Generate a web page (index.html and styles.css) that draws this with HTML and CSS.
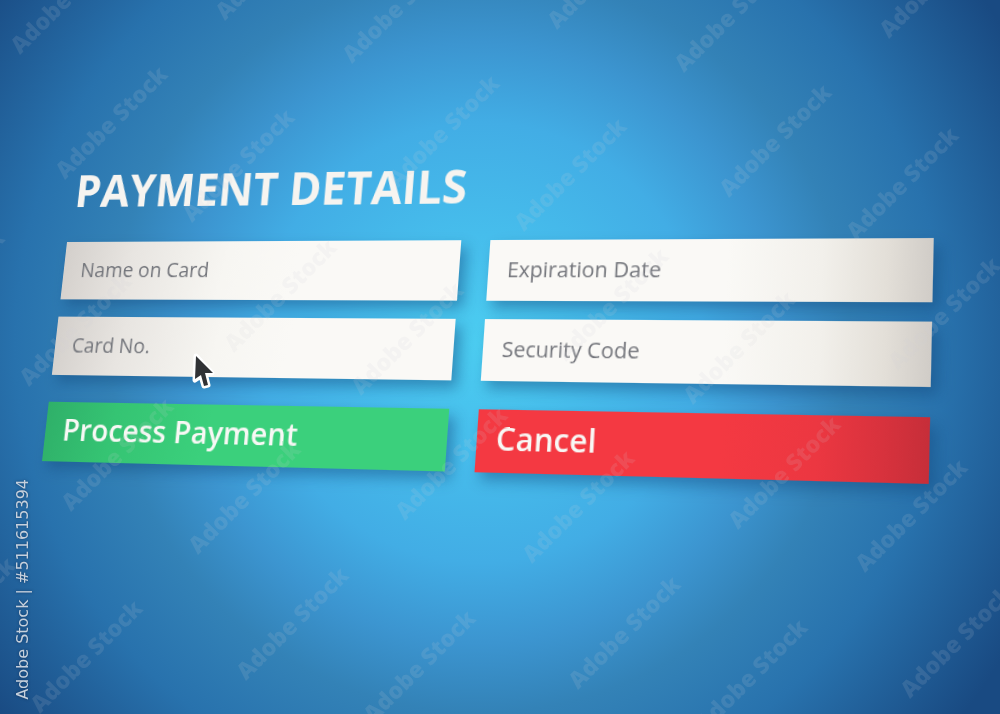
FILE: index.html
```html
<!DOCTYPE html>
<html lang="en">
<head>
  <meta charset="utf-8">
  <title>Payment Details</title>
  <link rel="stylesheet" href="styles.css">
</head>
<body>
  <main class="stage">
    <form class="payment">
      <h1 class="payment-title">PAYMENT DETAILS</h1>
      <div class="fields">
        <input class="field field-left" type="text" placeholder="Name on Card" aria-label="Name on Card">
        <input class="field field-right" type="text" placeholder="Expiration Date" aria-label="Expiration Date">
        <input class="field field-left" type="text" placeholder="Card No." aria-label="Card No.">
        <input class="field field-right" type="text" placeholder="Security Code" aria-label="Security Code">
      </div>
      <div class="actions">
        <button class="btn btn-pay" type="submit">Process Payment</button>
        <button class="btn btn-cancel" type="button">Cancel</button>
      </div>
    </form>
  </main>

  <svg class="cursor" width="30" height="42" viewBox="0 0 30 42" aria-hidden="true">
    <path class="cursor-edge" d="M7 3 L23 20 L16 20 L19 32 L15 33 L12 23 L6 27 Z"/>
    <path class="cursor-body" d="M7 3 L24 20 L16 20 L19 32 L15 33 L12 22 L6 26 Z"/>
  </svg>

  <!-- Repeating diagonal mark, always in pairs -->
  <svg class="watermark" viewBox="0 0 1000 714" preserveAspectRatio="xMidYMid slice" aria-hidden="true">
    <defs>
      <g id="pair">
        <text class="mark" text-anchor="end" transform="rotate(-45)">Adobe Stock</text>
        <text class="mark" text-anchor="end" transform="translate(127 43) rotate(-45)">Adobe Stock</text>
      </g>
    </defs>
    <use href="#pair" x="-3" y="-92"/>
    <use href="#pair" x="329" y="-83"/>
    <use href="#pair" x="661" y="-74"/>
    <use href="#pair" x="993" y="-65"/>
    <use href="#pair" x="169" y="76"/>
    <use href="#pair" x="501" y="85"/>
    <use href="#pair" x="833" y="94"/>
    <use href="#pair" x="6" y="240"/>
    <use href="#pair" x="338" y="249"/>
    <use href="#pair" x="670" y="258"/>
    <use href="#pair" x="1002" y="267"/>
    <use href="#pair" x="175" y="408"/>
    <use href="#pair" x="509" y="417"/>
    <use href="#pair" x="842" y="426"/>
    <use href="#pair" x="17" y="567"/>
    <use href="#pair" x="350" y="577"/>
    <use href="#pair" x="682" y="586"/>
    <use href="#pair" x="1014" y="595"/>
  </svg>

  <div class="stock-id">Adobe Stock | #511615394</div>
</body>
</html>
```

FILE: styles.css
```css
* {
  box-sizing: border-box;
}
body {
  position: relative;
  min-height: 100vh;
  margin: 0;
  overflow: hidden;
  font-family: "Open Sans", "Noto Sans", sans-serif;
  background: radial-gradient(circle at 48% 48%, #4bcdf1 0, #46bdec 110px, #42ade5 220px, #3c95d0 300px, #3382b7 370px, #2872ad 465px, #194a82 610px);
}
.stage {
  padding: 162px 101px 0 67px;
}

/* The whole form lies on one tilted plane */
.payment {
  transform-origin: 0 80px;
  transform: matrix3d(0.93, -0.0043, 0, -0.000129, -0.114, 1, 0, -0.000108, 0, 0, 1, 0, 0, 0, 0, 1);
}
.payment-title {
  height: 80px;
  margin: 0;
  padding-left: 3px;
  font-size: 44px;
  font-weight: 700;
  line-height: 56px;
  color: #f6f4f0;
  white-space: nowrap;
}
.fields, .actions {
  display: grid;
  grid-template-columns: 1fr 1fr;
  column-gap: 28px;
  row-gap: 17px;
}
.actions {
  margin-top: 26px;
}
.field, .btn {
  width: 100%;
  height: 57px;
  margin: 0;
  border: none;
  border-radius: 0;
  font-family: inherit;
  text-align: left;
  box-shadow: 6px 7px 12px rgba(18, 70, 125, 0.45);
}
.field {
  padding: 0 18px 2px;
  font-size: 20px;
  color: #74767c;
}
.field::placeholder {
  color: #74767c;
  opacity: 1;
}
.field-left {
  background: linear-gradient(100deg, #d3cfcb 0, #e8e5e1 18%, #f7f6f2 42%, #faf9f6 60%);
}
.field-right {
  background: linear-gradient(90deg, #faf9f6 55%, #f2f0eb 76%, #e3dfd8 90%, #d0ccc7 100%);
}
.btn {
  padding: 0 18px 6px;
  font-size: 29px;
  font-weight: 600;
  color: #f8f8f5;
  cursor: pointer;
}
.btn-pay {
  background: linear-gradient(100deg, #2fb069 0, #35c473 18%, #3bd07c 42%, #3bd07c 100%);
}
.btn-cancel {
  background: linear-gradient(90deg, #f43942 55%, #ec3741 76%, #d8323d 90%, #c62e39 100%);
}

.cursor {
  position: absolute;
  left: 189px;
  top: 353px;
}
.cursor-edge {
  fill: none;
  stroke: #fff;
  stroke-width: 5;
  stroke-linejoin: round;
}
.cursor-body {
  fill: #303235;
}

.watermark {
  position: absolute;
  inset: 0;
  width: 100%;
  height: 100%;
  pointer-events: none;
}
.mark {
  font-size: 23px;
  font-weight: 800;
  fill: rgba(205, 210, 215, 0.13);
}
.stock-id {
  position: absolute;
  left: 11px;
  bottom: 14px;
  writing-mode: vertical-rl;
  transform: rotate(180deg);
  font-family: "DejaVu Sans", sans-serif;
  font-size: 16px;
  line-height: 24px;
  color: #c6d0dc;
  text-shadow: 0 0 3px rgba(0, 20, 50, 0.5);
}
```
